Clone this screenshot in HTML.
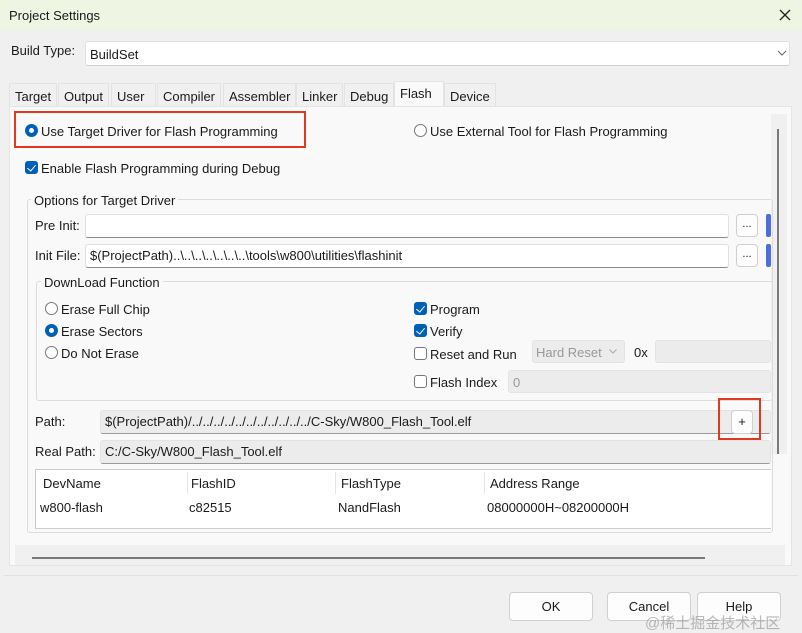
<!DOCTYPE html>
<html><head><style>
*{box-sizing:border-box;margin:0;padding:0}
body{width:802px;height:632px;overflow:hidden;background:#f0f0f0;font-family:"Liberation Sans","Noto Sans CJK SC",sans-serif;font-size:13px;color:#1a1a1a;position:relative}
.a{position:absolute;white-space:nowrap}
.in{position:absolute;background:#fff;border:1px solid #e0e0e0;border-bottom:1px solid #8a8a8a;border-radius:3px}
.dis{position:absolute;background:#ececec;border:1px solid #e3e3e3;border-radius:3px}
.btn{position:absolute;background:#fdfdfd;border:1px solid #d0d0d0;border-radius:4px;text-align:center}
.rad{position:absolute;width:13px;height:13px;border:1px solid #777;border-radius:50%;background:#fff}
.rad.on{border:4px solid #005fb8}
.chk{position:absolute;width:13px;height:13px;border:1px solid #777;border-radius:3px;background:#fff}
.chk.on{background:#005fb8;border-color:#005fb8}
.chk.on:after{content:"";position:absolute;left:3px;top:1px;width:4px;height:7px;border:solid #fff;border-width:0 1.5px 1.5px 0;transform:rotate(40deg)}
.tab{position:absolute;top:83px;height:23px;background:#f0f0f0;border:1px solid #e3e3e3;border-bottom:none;padding:5px 5px 0;}
.grp{position:absolute;border:1px solid #dcdcdc;border-radius:3px}
</style></head><body>
<div class="a" style="left:0;top:0;width:802px;height:30px;background:#eef5e3"></div>
<div class="a" style="left:9px;top:8px">Project Settings</div>
<svg class="a" style="left:779px;top:9px" width="12" height="12"><path d="M1 1L11 11M11 1L1 11" stroke="#222" stroke-width="1.3"/></svg>

<div class="a" style="left:11px;top:43px">Build Type:</div>
<div class="in" style="left:85px;top:41px;width:705px;height:25px;border-bottom-color:#d0d0d0"></div>
<div class="a" style="left:90px;top:47px">BuildSet</div>
<svg class="a" style="left:777px;top:50px" width="10" height="6"><path d="M1 1L5 5L9 1" stroke="#666" fill="none"/></svg>

<div class="tab" style="left:9px">Target</div>
<div class="tab" style="left:58px">Output</div>
<div class="tab" style="left:111px;width:45px">User</div>
<div class="tab" style="left:157px">Compiler</div>
<div class="tab" style="left:223px">Assembler</div>
<div class="tab" style="left:296px">Linker</div>
<div class="tab" style="left:344px">Debug</div>
<div class="tab" style="left:394px;top:81px;height:26px;width:50px;background:#f9f9f9;padding-top:4px">Flash</div>
<div class="tab" style="left:444px">Device</div>

<div class="a" style="left:9px;top:106px;width:783px;height:460px;background:#f9f9f9;border:1px solid #e5e5e5"></div>
<div class="a" style="left:771px;top:114px;width:16px;height:340px;background:#f0f0f0"></div>
<div class="a" style="left:777px;top:129px;width:2px;height:325px;background:#7a7a7a"></div>

<div class="a" style="left:14px;top:111px;width:292px;height:37px;border:2px solid #e0391d"></div>
<div class="rad on" style="left:25px;top:124px"></div>
<div class="a" style="left:41px;top:124px">Use Target Driver for Flash Programming</div>
<div class="rad" style="left:414px;top:124px"></div>
<div class="a" style="left:430px;top:124px">Use External Tool for Flash Programming</div>
<div class="chk on" style="left:25px;top:161px"></div>
<div class="a" style="left:41px;top:161px">Enable Flash Programming during Debug</div>

<div class="grp" style="left:27px;top:199px;width:746px;height:334px"></div>
<div class="a" style="left:31px;top:193px;background:#f9f9f9;padding:0 3px">Options for Target Driver</div>
<div class="a" style="left:35px;top:218px">Pre Init:</div>
<div class="in" style="left:85px;top:214px;width:644px;height:24px"></div>
<div class="btn" style="left:736px;top:214px;width:22px;height:23px;font-size:11px;line-height:18px">...</div>
<div class="a" style="left:766px;top:214px;width:5px;height:23px;background:#4f6fd8;border-radius:2px"></div>
<div class="a" style="left:35px;top:248px">Init File:</div>
<div class="in" style="left:85px;top:244px;width:644px;height:24px"></div>
<div class="a" style="left:90px;top:248px">$(ProjectPath)..\..\..\..\..\..\..\tools\w800\utilities\flashinit</div>
<div class="btn" style="left:736px;top:244px;width:22px;height:23px;font-size:11px;line-height:18px">...</div>
<div class="a" style="left:766px;top:244px;width:5px;height:23px;background:#4f6fd8;border-radius:2px"></div>

<div class="grp" style="left:36px;top:281px;width:737px;height:120px"></div>
<div class="a" style="left:41px;top:275px;background:#f9f9f9;padding:0 3px">DownLoad Function</div>
<div class="rad" style="left:45px;top:302px"></div><div class="a" style="left:61px;top:302px">Erase Full Chip</div>
<div class="rad on" style="left:45px;top:324px"></div><div class="a" style="left:61px;top:324px">Erase Sectors</div>
<div class="rad" style="left:45px;top:346px"></div><div class="a" style="left:61px;top:346px">Do Not Erase</div>
<div class="chk on" style="left:414px;top:302px"></div><div class="a" style="left:430px;top:302px">Program</div>
<div class="chk on" style="left:414px;top:324px"></div><div class="a" style="left:430px;top:324px">Verify</div>
<div class="chk" style="left:414px;top:347px"></div><div class="a" style="left:430px;top:347px">Reset and Run</div>
<div class="dis" style="left:532px;top:340px;width:93px;height:23px"></div>
<div class="a" style="left:536px;top:345px;color:#999">Hard Reset</div>
<svg class="a" style="left:609px;top:349px" width="8" height="5"><path d="M0.5 0.5L4 4L7.5 0.5" stroke="#aaa" fill="none"/></svg>
<div class="a" style="left:634px;top:345px">0x</div>
<div class="dis" style="left:655px;top:340px;width:116px;height:23px"></div>
<div class="chk" style="left:414px;top:375px"></div><div class="a" style="left:430px;top:375px">Flash Index</div>
<div class="dis" style="left:508px;top:370px;width:263px;height:23px"></div>
<div class="a" style="left:513px;top:375px;color:#999">0</div>

<div class="a" style="left:35px;top:414px">Path:</div>
<div class="dis" style="left:100px;top:410px;width:671px;height:24px;border-bottom-color:#999"></div>
<div class="a" style="left:105px;top:414px">$(ProjectPath)/../../../../../../../../../../../C-Sky/W800_Flash_Tool.elf</div>
<div class="btn" style="left:731px;top:410px;width:22px;height:24px;line-height:22px">+</div>
<div class="a" style="left:718px;top:398px;width:43px;height:42px;border:2px solid #e0391d"></div>
<div class="a" style="left:35px;top:444px">Real Path:</div>
<div class="dis" style="left:100px;top:440px;width:671px;height:24px;border-bottom-color:#999"></div>
<div class="a" style="left:105px;top:444px">C:/C-Sky/W800_Flash_Tool.elf</div>

<div class="a" style="left:35px;top:469px;width:736px;height:60px;background:#fff;border:1px solid #ccc;border-right:none"></div>
<div class="a" style="left:187px;top:472px;width:1px;height:22px;background:#e5e5e5"></div>
<div class="a" style="left:335px;top:472px;width:1px;height:22px;background:#e5e5e5"></div>
<div class="a" style="left:484px;top:472px;width:1px;height:22px;background:#e5e5e5"></div>
<div class="a" style="left:43px;top:476px">DevName</div>
<div class="a" style="left:191px;top:476px">FlashID</div>
<div class="a" style="left:341px;top:476px">FlashType</div>
<div class="a" style="left:490px;top:476px">Address Range</div>
<div class="a" style="left:40px;top:500px">w800-flash</div>
<div class="a" style="left:189px;top:500px">c82515</div>
<div class="a" style="left:338px;top:500px">NandFlash</div>
<div class="a" style="left:487px;top:500px">08000000H~08200000H</div>

<div class="a" style="left:15px;top:545px;width:770px;height:20px;background:#f0f0f0"></div>
<div class="a" style="left:32px;top:557px;width:673px;height:2px;background:#7a7a7a"></div>
<div class="a" style="left:4px;top:575px;width:794px;height:1px;background:#e0e0e0"></div>

<div class="btn" style="left:509px;top:592px;width:84px;height:29px;line-height:27px">OK</div>
<div class="btn" style="left:607px;top:592px;width:84px;height:29px;line-height:27px">Cancel</div>
<div class="btn" style="left:697px;top:592px;width:84px;height:29px;line-height:27px">Help</div>
<div class="a" style="left:645px;top:612px;color:rgba(160,160,160,.75);font-size:15px">@稀土掘金技术社区</div>
</body></html>
